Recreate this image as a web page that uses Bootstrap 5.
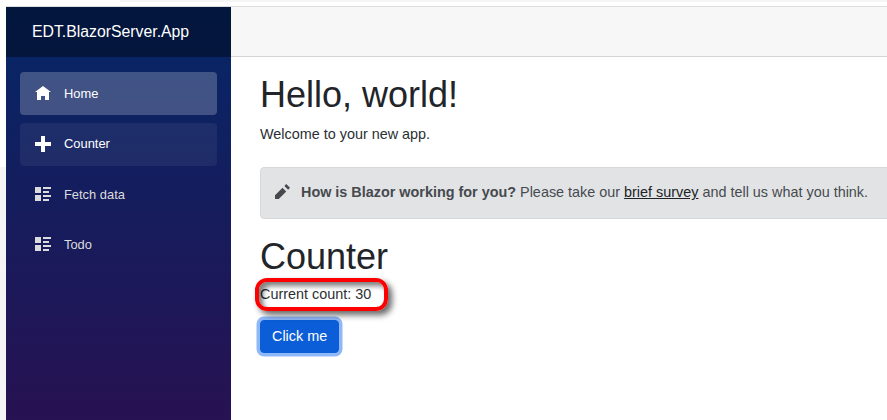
<!DOCTYPE html>
<html lang="en">
<head>
<meta charset="utf-8">
<title>Counter</title>
<link href="https://cdn.jsdelivr.net/npm/bootstrap@5.3.0/dist/css/bootstrap.min.css" rel="stylesheet">
<style>
html,body{height:420px;overflow:hidden}
body{font-family:"Liberation Sans",Arial,sans-serif;font-size:14.4px;color:#212529;background:linear-gradient(#fff 0 167px,#f5f5f5 167px)}
.strip-top{height:2px;margin-left:120px;background:#f5f5f5}
.strip-gap{height:4px}
.shell{margin-left:6px;height:414px;border-top:1px solid #ddd}
.side{width:225px;flex:none;background:linear-gradient(180deg,#052767 0,#3a0647 640px)}
.side-head{height:50px;background:rgba(0,0,0,.4);padding:0 0 0 26px}
.side-head .navbar-brand{color:#fff;font-size:15.8px;margin:0;padding:0}
.side-nav{padding:15px 14px 0}
.side-nav .nav-link{height:43px;margin-bottom:7.5px;padding:0 0 0 15px;color:#dcdcdc;font-size:12.9px;border-radius:4px;display:flex;align-items:center}
.side-nav .nav-link svg{width:16px;height:16px;margin-right:13px;fill:currentColor;flex:none}
.side-nav .nav-link.on{background:rgba(255,255,255,.22);color:#fff}
.side-nav .nav-link.soft{background:rgba(255,255,255,.06);color:#fff}
.content{background:#fff;min-width:0}
.top-row{height:50px;background:#f7f7f7;border-bottom:1px solid #d6d5d5}
.page{padding:16px 0 0 29px}
.page h1{font-size:36px;font-weight:400;line-height:43px;margin-bottom:8px}
.page p{margin-bottom:0;color:#2b2f33}
.note{margin:21px -30px 16px 0;padding:14.5px 14px;white-space:nowrap;background:#e2e3e5;border-color:#d6d8db;color:#464a4f;border-radius:4px}
.note svg{width:15px;height:15px;fill:currentColor;margin-right:7px;vertical-align:-2px}
.note a{color:#202326}
.counter-line{position:relative;margin-top:-2px}
.callout{position:absolute;left:-5px;top:-6px;width:133px;height:33px;border:4px solid #f00;border-radius:12px;box-shadow:4px 4px 6px rgba(0,0,0,.6),inset 4px 4px 5px rgba(0,0,0,.5)}
.go{margin-top:14px;background:#0b5ed7;border-color:#0b5ed7;font-size:14.4px;padding:5px 11px;line-height:21.6px;border-radius:4px;box-shadow:0 0 0 3.5px #8fb8f8}
</style>
</head>
<body>
<div class="strip-top"></div>
<div class="strip-gap"></div>
<div class="shell d-flex">
  <aside class="side">
    <nav class="navbar side-head"><a class="navbar-brand" href="#">EDT.BlazorServer.App</a></nav>
    <ul class="nav flex-column side-nav">
      <li class="nav-item"><a class="nav-link on" href="#"><svg viewBox="0 0 8 8"><path d="M4 0l-4 3h1v4h2v-2h2v2h2v-4.03l1 .03-4-3z"/></svg>Home</a></li>
      <li class="nav-item"><a class="nav-link soft" href="#"><svg viewBox="0 0 8 8"><path d="M3 0v3h-3v2h3v3h2v-3h3v-2h-3v-3h-2z"/></svg>Counter</a></li>
      <li class="nav-item"><a class="nav-link" href="#"><svg viewBox="0 0 8 8"><path d="M0 0v3h3v-3h-3zm4 0v1h4v-1h-4zm0 2v1h3v-1h-3zm-4 2v3h3v-3h-3zm4 0v1h4v-1h-4zm0 2v1h3v-1h-3z"/></svg>Fetch data</a></li>
      <li class="nav-item"><a class="nav-link" href="#"><svg viewBox="0 0 8 8"><path d="M0 0v3h3v-3h-3zm4 0v1h4v-1h-4zm0 2v1h3v-1h-3zm-4 2v3h3v-3h-3zm4 0v1h4v-1h-4zm0 2v1h3v-1h-3z"/></svg>Todo</a></li>
    </ul>
  </aside>
  <div class="content flex-grow-1">
    <div class="top-row"></div>
    <main class="page">
      <h1>Hello, world!</h1>
      <p>Welcome to your new app.</p>
      <div class="alert alert-secondary note" role="alert"><svg viewBox="0 0 8 8"><path d="M6 0l-1 1 2 2 1-1-2-2zm-2 2l-4 4v2h2l4-4-2-2z"/></svg> <strong>How is Blazor working for you?</strong> Please take our <a href="#">brief survey</a> and tell us what you think.</div>
      <h1>Counter</h1>
      <p class="counter-line">Current count: 30<span class="callout"></span></p>
      <button type="button" class="btn btn-primary go">Click me</button>
    </main>
  </div>
</div>
<script src="https://cdn.jsdelivr.net/npm/bootstrap@5.3.0/dist/js/bootstrap.bundle.min.js"></script>
</body>
</html>
